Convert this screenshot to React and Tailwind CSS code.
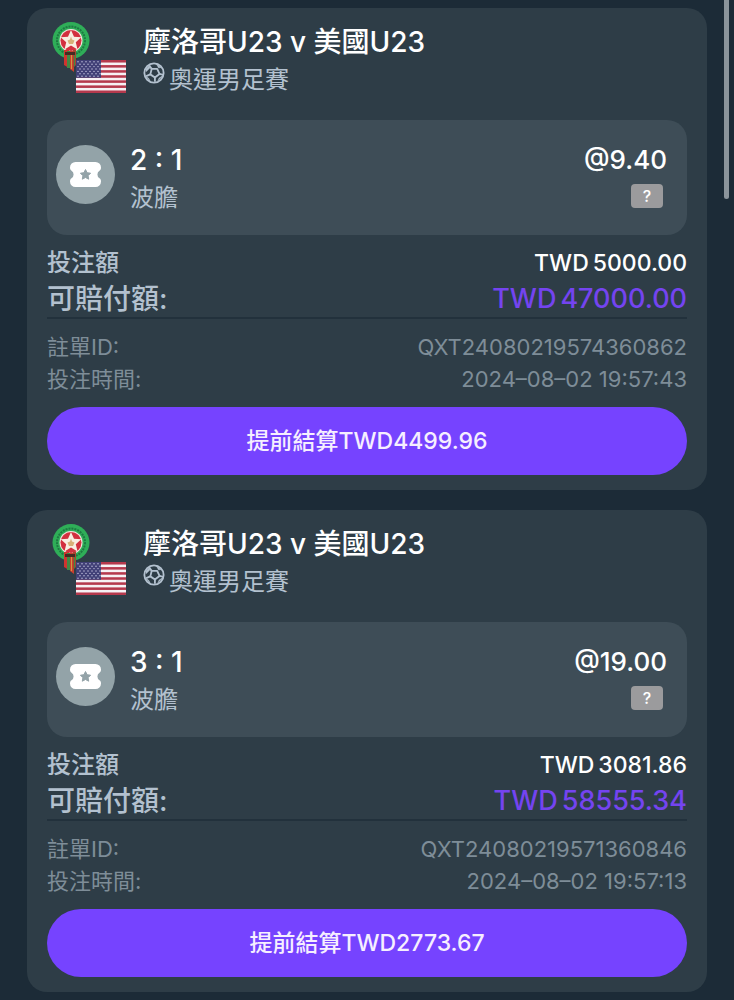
import React from "react";

const bets = [
  {
    id: "QXT24080219574360862",
    score: "2 : 1",
    odds: "@9.40",
    stake: "5000.00",
    payout: "47000.00",
    time: "2024–08–02 19:57:43",
    cashout: "TWD4499.96",
  },
  {
    id: "QXT24080219571360846",
    score: "3 : 1",
    odds: "@19.00",
    stake: "3081.86",
    payout: "58555.34",
    time: "2024–08–02 19:57:13",
    cashout: "TWD2773.67",
  },
];

function MoroccoCrest() {
  return (
    <svg viewBox="0 0 38 50" className="absolute left-0 top-0 h-[50px] w-[38px]" aria-hidden="true">
      <circle cx="19" cy="18.5" r="18.5" fill="#2fae58" />
      <circle cx="19" cy="18.5" r="14" fill="none" stroke="#1d7a42" strokeWidth="2" strokeDasharray="2 1" />
      <circle cx="19" cy="18.5" r="11.5" fill="#f3e6df" />
      <circle cx="19" cy="18.5" r="10.5" fill="#d2303f" />
      <path
        d="M19 8l3 6.700 7.300.600-5.500 4.900 1.700 7.300-6.500-3.900-6.500 3.900 1.700-7.300-5.500-4.900 7.300-.6z"
        fill="#f8eee2"
      />
      <path d="M19 14.500l1 3 2.500 1-1.500 3.500h-4l-1.500-3.500 2.500-1z" fill="#d8b078" />
      <path d="M12 28h5v18l-5-3z" fill="#d0342f" />
      <rect x="15" y="29" width="3" height="17" fill="#3f8a45" />
      <path d="M18 29h4v21l-4-3z" fill="#c9402f" />
      <rect x="19" y="30" width="1" height="17" fill="#d09a45" />
      <path d="M21 28h3v15l-3 3z" fill="#a8452f" />
      <rect x="22" y="32" width="1" height="12" fill="#3f8a45" />
      <rect x="13" y="30" width="10" height="3" fill="#452c22" />
    </svg>
  );
}

function UsaFlag() {
  const stripes = [0, 1, 2, 3, 4, 5, 6];
  const rows = [0, 1, 2, 3, 4, 5, 6];
  return (
    <svg viewBox="0 0 50 33" className="absolute left-[24px] top-[38px] h-[33px] w-[50px]" aria-hidden="true">
      <rect width="50" height="33" fill="#f6f1f4" />
      {stripes.map((i) => (
        <rect key={i} y={i * 5.08} width="50" height="2.54" fill="#b5394d" />
      ))}
      <rect width="25" height="17.8" fill="#414077" />
      {rows.map((r) =>
        [0, 1, 2, 3, 4, 5].map((c) => (
          <circle key={r + "-" + c} cx={2 + c * 4 + (r % 2) * 2} cy={1.8 + r * 2.4} r="0.7" fill="#c9c8e2" />
        ))
      )}
    </svg>
  );
}

function SoccerBall() {
  return (
    <svg
      viewBox="0 0 24 24"
      className="h-[22px] w-[22px] shrink-0"
      fill="none"
      stroke="#b3c1cf"
      strokeWidth="2"
      strokeLinejoin="round"
      aria-hidden="true"
    >
      <circle cx="12" cy="12" r="10.500" />
      <path d="M9.500 7.500h6l2.500 5.500-5 4-5-3.500z" />
      <path d="M9.500 7.500L7 4M18 13l4 1M13 17v4.500M8 13.500l-4.500 2" />
      <path
        d="M7.500 3L3 8l.5 2.500 4-4zM14.500 2l5.500 4-3 .5zM2.500 15l4 3 2 4zM21.500 15l-4 2.500-1.500 3.500z"
        fill="#b3c1cf"
        strokeWidth="0.5"
      />
    </svg>
  );
}

function TicketIcon() {
  return (
    <div className="mt-[5px] flex h-[59px] w-[59px] shrink-0 items-center justify-center rounded-full bg-[#93a3a8]">
      <svg viewBox="0 0 31 25" className="h-[25px] w-[31px]" aria-hidden="true">
        <path
          d="M5.500 0h20a5.500 5.500 0 0 1 5.500 5.500c0 1.500-.5 2.500-1.500 3.200a4.500 4.500 0 0 0 0 7.600c1 .7 1.500 1.700 1.500 3.200a5.500 5.500 0 0 1-5.500 5.500h-20A5.500 5.500 0 0 1 0 19.500c0-1.500.5-2.500 1.500-3.200a4.500 4.500 0 0 0 0-7.600C.5 8 0 7 0 5.500A5.500 5.500 0 0 1 5.500 0z"
          fill="#fff"
        />
        <path
          d="M15.500 7.500l1.600 3.200 3.500.5-2.500 2.500.6 3.500-3.200-1.700-3.200 1.700.6-3.500-2.500-2.500 3.500-.5z"
          fill="#93a3a8"
          stroke="#93a3a8"
          strokeLinejoin="round"
        />
      </svg>
    </div>
  );
}

function BetCard({ bet }) {
  return (
    <div className="rounded-[20px] bg-[#2e3d47] px-5 pt-[14px] pb-[15px]">
      <div className="flex">
        <div className="relative ml-[5px] h-[84px] w-[91px] shrink-0">
          <MoroccoCrest />
          <UsaFlag />
        </div>
        <div>
          <h2 className="text-[28px] leading-10 font-medium text-white">摩洛哥U23 v 美國U23</h2>
          <div className="flex text-2xl leading-9 text-[#b3c1cf]">
            <SoccerBall />
            <span className="ml-1">奧運男足賽</span>
          </div>
        </div>
      </div>

      <div className="mt-[14px] flex h-[115px] items-start rounded-[20px] bg-[#3e4d57] pt-5 pr-5 pl-[9px]">
        <TicketIcon />
        <div className="ml-[15px] flex-1">
          <p className="text-[28px] leading-10 font-medium text-white">{bet.score}</p>
          <p className="text-2xl leading-9 text-[#b3c1cf]">波膽</p>
        </div>
        <div className="flex flex-col items-end">
          <p className="text-[26px] leading-10 font-medium text-white">{bet.odds}</p>
          <div className="flex h-8 items-center pr-1">
            <button className="h-6 w-8 rounded-sm bg-[#9b9b9d] text-base leading-6 font-medium text-white">?</button>
          </div>
        </div>
      </div>

      <dl className="mt-[10px] border-b-2 border-[#22313c] font-medium">
        <div className="flex justify-between">
          <dt className="text-2xl leading-9 text-[#b3c1cf]">投注額</dt>
          <dd className="flex gap-1 text-[23px] leading-9 text-white">
            <span>TWD</span>
            <span>{bet.stake}</span>
          </dd>
        </div>
        <div className="flex justify-between">
          <dt className="text-[28px] leading-9 text-[#b3c1cf]">可賠付額:</dt>
          <dd className="flex gap-1 text-[27px] leading-9 text-[#7444f0]">
            <span>TWD</span>
            <span>{bet.payout}</span>
          </dd>
        </div>
      </dl>

      <dl className="mt-3 text-[22px] leading-8 text-[#7e8d98]">
        <div className="flex justify-between">
          <dt>註單ID:</dt>
          <dd>{bet.id}</dd>
        </div>
        <div className="flex justify-between">
          <dt>投注時間:</dt>
          <dd>{bet.time}</dd>
        </div>
      </dl>

      <button className="mt-3 h-[68px] w-full rounded-full bg-[#7643ff] text-[23px] font-medium text-[#f6efff]">
        提前結算{bet.cashout}
      </button>
    </div>
  );
}

function App() {
  return (
    <main
      lang="zh-Hant"
      className="relative min-h-screen bg-[#1c2b37] px-[27px] py-2 font-['Inter','Noto_Sans_CJK_TC',sans-serif]"
    >
      <div className="flex flex-col gap-5">
        {bets.map((bet) => (
          <BetCard key={bet.id} bet={bet} />
        ))}
      </div>
      <div className="fixed top-0 right-[5px] h-[199px] w-[5px] rounded-b-full bg-[#8b949b]"></div>
    </main>
  );
}

export default App;
